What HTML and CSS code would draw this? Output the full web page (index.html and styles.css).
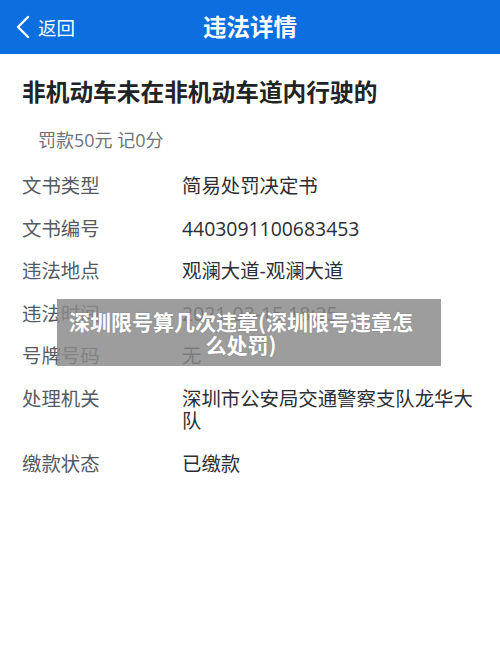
FILE: index.html
```html
<!DOCTYPE html>
<html lang="zh-CN">
<head>
<meta charset="utf-8">
<title>违法详情</title>
<link rel="stylesheet" href="styles.css">
</head>
<body>
<header class="topbar">
  <div class="back">
    <svg class="chev" width="14" height="24" viewBox="0 0 14 24"><path d="M12 2 L2 12 L12 22" fill="none" stroke="#fff" stroke-width="2.4" stroke-linecap="round" stroke-linejoin="round"/></svg>
    <span>返回</span>
  </div>
  <div class="title">违法详情</div>
  <div></div>
</header>
<main class="content">
  <h1 class="headline">非机动车未在非机动车道内行驶的</h1>
  <p class="fine">罚款50元 记0分</p>
  <dl class="info">
    <dt>文书类型</dt><dd>简易处罚决定书</dd>
    <dt>文书编号</dt><dd>4403091100683453</dd>
    <dt>违法地点</dt><dd>观澜大道-观澜大道</dd>
    <dt>违法时间</dt><dd>2021-03-15 18:25</dd>
    <dt>号牌号码</dt><dd>无</dd>
    <dt>处理机关</dt><dd>深圳市公安局交通警察支队龙华大队</dd>
    <dt>缴款状态</dt><dd>已缴款</dd>
  </dl>
</main>
<div class="caption">深圳限号算几次违章(深圳限号违章怎么处罚)</div>
</body>
</html>
```

FILE: styles.css
```css
* { box-sizing: border-box; }
html, body {
  margin: 0;
  padding: 0;
  background: #ffffff;
}
body {
  font-family: "Open Sans", "Noto Sans CJK SC", sans-serif;
  color: #333539;
  position: relative;
  min-height: 666px;
}
.topbar {
  height: 54px;
  background: #0b6fdf;
  color: #ffffff;
  display: grid;
  grid-template-columns: 1fr auto 1fr;
  align-items: center;
}
.back {
  display: flex;
  align-items: center;
  padding-left: 16px;
  font-size: 18.5px;
  gap: 8px;
}
.chev { display: block; }
.title {
  font-size: 23.5px;
  font-weight: 700;
  line-height: 30px;
}
.content {
  padding: 0 20px 0 22px;
}
.headline {
  margin: 0;
  padding-top: 22px;
  font-size: 23.7px;
  line-height: 32px;
  font-weight: 700;
  color: #222326;
}
.fine {
  margin: 21px 0 0 0;
  padding-left: 16px;
  font-size: 18px;
  line-height: 22px;
  color: #6e737b;
}
.info {
  margin: 24px 0 0 0;
  display: grid;
  grid-template-columns: 160px 1fr;
  row-gap: 20.6px;
  font-size: 19.4px;
  line-height: 22px;
}
.info dt {
  color: #555a62;
}
.info dd {
  margin: 0;
  color: #2c2e33;
}
.caption {
  position: absolute;
  left: 57px;
  top: 299px;
  width: 384px;
  height: 67px;
  background: rgba(138, 138, 138, 0.84);
  color: #ffffff;
  font-family: "Noto Sans CJK SC", sans-serif;
  font-size: 21px;
  font-weight: 700;
  line-height: 23px;
  text-align: center;
  display: flex;
  align-items: center;
  justify-content: center;
  padding: 0 25px 0 9px;
  text-shadow: 0 0 2px rgba(0,0,0,0.15);
}
```
